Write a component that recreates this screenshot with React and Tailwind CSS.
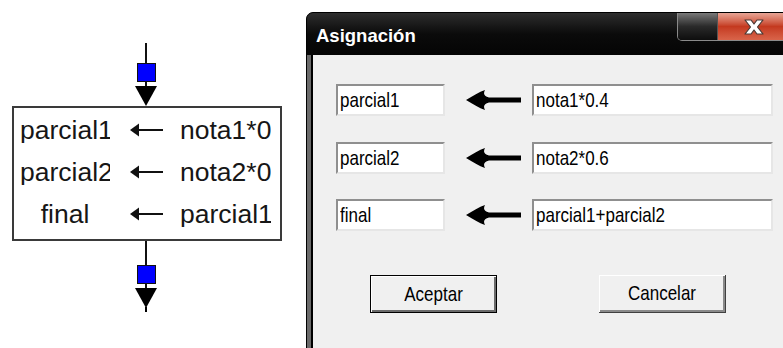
import React from 'react';

const chartRows = [
  { left: 'parcial1', right: 'nota1*0.4' },
  { left: 'parcial2', right: 'nota2*0.6' },
  { left: 'final', right: 'parcial1+parcial2' },
];

function ThinArrow() {
  return (
    <svg width="33" height="14" viewBox="0 0 33 14" className="shrink-0">
      <path d="M0 7 L9 0.5 L9 13.5 Z" fill="#111" />
      <line x1="8" y1="7" x2="33" y2="7" stroke="#111" strokeWidth="2" />
    </svg>
  );
}

function BoldArrow() {
  return (
    <svg width="55" height="20" viewBox="0 0 55 20" className="shrink-0">
      <path
        d="M0 10 C7 6 13 2 19 0 C17 4 18 6 23 7.5 L55 7.5 L55 12.5 L23 12.5 C18 14 17 16 19 20 C13 18 7 14 0 10 Z"
        fill="#000"
      />
    </svg>
  );
}

function Connector({ bottom }) {
  if (bottom) {
    return (
      <svg width="24" height="72" viewBox="0 0 24 72" className="shrink-0">
        <line x1="11" y1="0" x2="11" y2="24" stroke="#111" strokeWidth="2" />
        <rect x="2.5" y="24.5" width="18" height="18" fill="#0000ff" stroke="#111" />
        <line x1="11" y1="43" x2="11" y2="47" stroke="#111" strokeWidth="2" />
        <path d="M0 47 L22 47 L11 67 Z" fill="#000" />
        <line x1="11" y1="66" x2="11" y2="71" stroke="#000" strokeWidth="2" />
      </svg>
    );
  }
  return (
    <svg width="24" height="63" viewBox="0 0 24 63" className="shrink-0">
      <line x1="11" y1="0" x2="11" y2="20" stroke="#111" strokeWidth="2" />
      <rect x="2.5" y="20.5" width="18" height="18" fill="#0000ff" stroke="#111" />
      <line x1="11" y1="39" x2="11" y2="43" stroke="#111" strokeWidth="2" />
      <path d="M0 43 L22 43 L11 63 Z" fill="#000" />
    </svg>
  );
}

function Field({ value, width }) {
  return (
    <div
      className={`${width} h-[32px] shrink-0 bg-white border-2 border-t-[#8f8f8f] border-l-[#8f8f8f] border-r-[#e6e6e6] border-b-[#e6e6e6] flex items-center pl-[2px] overflow-hidden whitespace-nowrap`}
    >
      <span className="inline-block scale-y-[1.15] text-[17px] text-black leading-none">{value}</span>
    </div>
  );
}

function WinButton({ label, isDefault }) {
  return (
    <div
      className={
        isDefault
          ? 'w-[127px] h-[38px] shrink-0 border border-black bg-[#f0f0f0] flex items-center justify-center shadow-[inset_1px_1px_0_#fff,inset_-2px_-2px_0_#6b6b6b]'
          : 'w-[127px] h-[38px] shrink-0 bg-[#f0f0f0] flex items-center justify-center border-r border-b border-[#404040] shadow-[inset_1px_1px_0_#fff,inset_-2px_-2px_0_#8a8a8a]'
      }
    >
      <span className="inline-block scale-y-[1.15] text-[17px] text-black leading-none">{label}</span>
    </div>
  );
}

export default function App() {
  return (
    <div className="w-[783px] h-[348px] bg-white overflow-hidden flex font-['Liberation_Sans',Arial,sans-serif]">
      {/* flowchart */}
      <div className="w-[306px] shrink-0 pt-[43px] pl-[12px]">
        <div className="w-[270px] flex flex-col items-center">
          <Connector />
          <div className="w-[270px] h-[135px] border-2 border-[#3a3a3a] pt-[1px] text-[26.5px] text-[#161616]">
            {chartRows.map((r) => (
              <div key={r.left} className="h-[42px] flex items-center">
                <div className="ml-[6px] w-[90px] shrink-0 overflow-hidden whitespace-nowrap text-center leading-none">
                  {r.left}
                </div>
                <div className="ml-[20px]">
                  <ThinArrow />
                </div>
                <div className="ml-[17px] w-[91px] shrink-0 overflow-hidden whitespace-nowrap leading-none">
                  {r.right}
                </div>
              </div>
            ))}
          </div>
          <Connector bottom />
        </div>
      </div>

      {/* dialog */}
      <div className="mt-[12px] w-[490px] h-[400px] shrink-0 flex flex-col bg-black border border-black rounded-t-[7px] overflow-hidden">
        <div className="h-[42px] shrink-0 flex bg-gradient-to-b from-[#2e2e2e] via-[#0b0b0b] to-[#050505]">
          <div className="flex-1 flex items-center pl-[9px] pt-[4px]">
            <span className="text-white font-bold text-[18.5px] leading-none">Asignación</span>
          </div>
          <div className="self-start flex mr-[5px] h-[28px] border border-t-0 border-[#8a8a8a] rounded-bl-[5px] overflow-hidden">
            <div className="w-[40px] h-full bg-gradient-to-b from-[#7a7a7a] via-[#2a2a2a] to-[#0e0e0e] border-r border-[#555]" />
            <div className="w-[71px] h-full bg-gradient-to-b from-[#e7a596] via-[#c4391f] to-[#d9644a] flex items-center justify-center">
              <svg width="22" height="16" viewBox="0 0 22 16">
                <path
                  d="M2 1 L8 1 L11 5 L14 1 L20 1 L14.5 8 L20 15 L14 15 L11 11 L8 15 L2 15 L7.5 8 Z"
                  fill="#fff"
                  stroke="#4a3a36"
                  strokeWidth="1.2"
                  strokeLinejoin="round"
                />
              </svg>
            </div>
          </div>
        </div>
        <div className="flex-1 flex">
          <div className="w-[4px] shrink-0 bg-[#6a6a6a] border-r-2 border-black box-content" />
          <div className="flex-1 bg-[#f0f0f0] pl-[23px] pt-[29px]">
            {chartRows.map((r, i) => (
              <div key={r.left} className={`flex items-center ${i === 1 ? 'mt-[26px]' : i === 2 ? 'mt-[25px]' : ''}`}>
                <Field value={r.left} width="w-[109px]" />
                <div className="ml-[21px]">
                  <BoldArrow />
                </div>
                <div className="ml-[11px]">
                  <Field value={r.right} width="w-[241px]" />
                </div>
              </div>
            ))}
            <div className="flex mt-[44px] ml-[34px]">
              <WinButton label="Aceptar" isDefault />
              <div className="ml-[102px]">
                <WinButton label="Cancelar" />
              </div>
            </div>
          </div>
        </div>
      </div>
    </div>
  );
}
